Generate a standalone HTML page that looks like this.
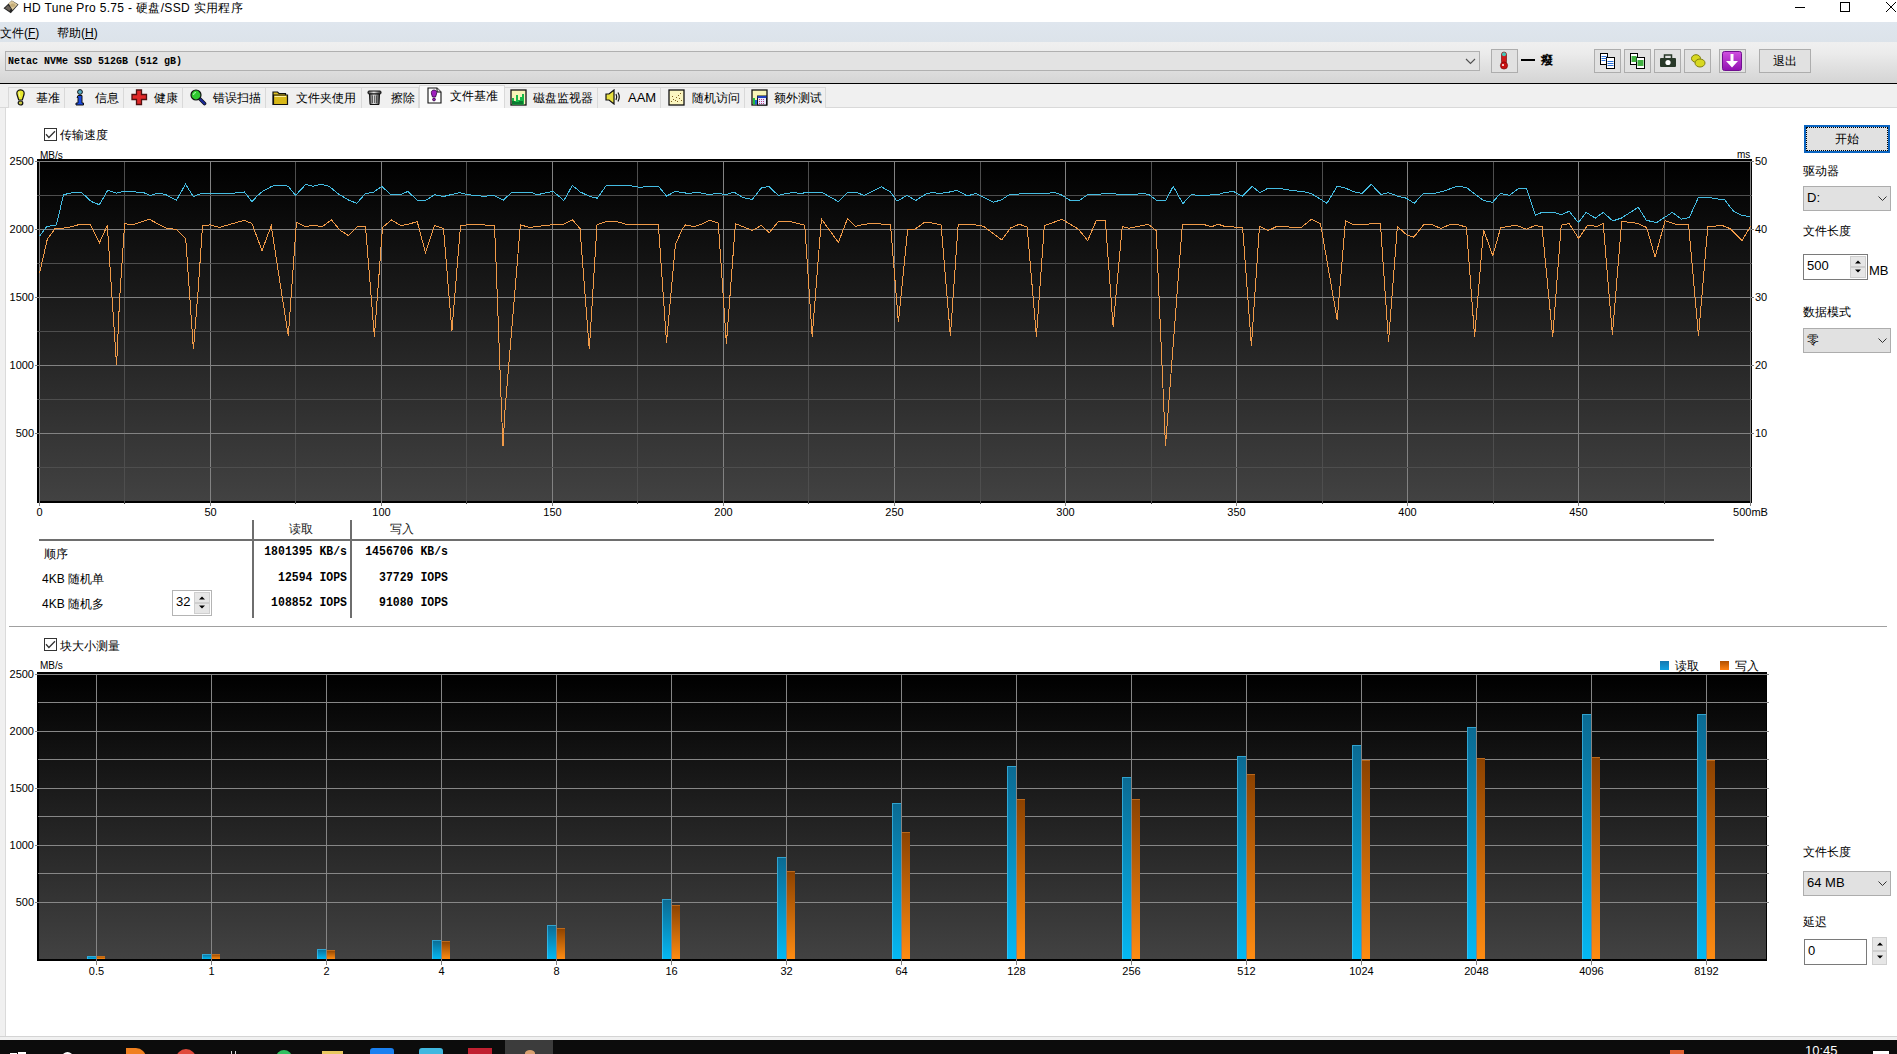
<!DOCTYPE html><html><head><meta charset="utf-8"><style>
*{box-sizing:border-box;}
html,body{margin:0;padding:0;}
body{width:1897px;height:1054px;position:relative;overflow:hidden;background:#ffffff;font-family:"Liberation Sans",sans-serif;font-size:12px;color:#000;}
.a{position:absolute;}
.t{position:absolute;white-space:nowrap;line-height:14px;}
.btn{position:absolute;background:#e1e1e1;border:1px solid #adadad;}
.combo{position:absolute;background:#e1e1e1;border:1px solid #adadad;}
.mono{font-family:"Liberation Mono",monospace;font-weight:bold;}
.spin{position:absolute;background:#e6e6e6;border:1px solid #cfcfcf;}
</style></head><body><div class="a" style="left:0px;top:0px;width:1897px;height:21px;background:#fff;"></div>
<svg class="a" style="left:2px;top:0px" width="17" height="14" viewBox="0 0 17 14"><path d="M1.5 8.2 L9.8 0.4 L16.5 4.6 L8.8 13.3 Z" fill="#262626"/><path d="M6.5 3.2 L10 0.8 L15.6 4.6 L10.5 10 Z" fill="#dcc89a"/><path d="M3 8.2 L6 5.2 L9 8.5 L7.5 11 Z" fill="#6a6258"/><ellipse cx="10.8" cy="5.2" rx="2.4" ry="1.8" fill="#c4ac78"/></svg>
<div class="t" style="left:23px;top:1px;letter-spacing:0.33px;">HD Tune Pro 5.75 - 硬盘/SSD 实用程序</div>
<div class="a" style="left:1795px;top:7px;width:10px;height:1px;background:#000"></div>
<div class="a" style="left:1840px;top:2px;width:10px;height:10px;border:1px solid #000"></div>
<svg class="a" style="left:1885px;top:1px" width="12" height="12" viewBox="0 0 12 12"><path d="M1 1 L11 11 M11 1 L1 11" stroke="#000" stroke-width="1"/></svg>
<div class="a" style="left:0px;top:22px;width:1897px;height:20px;background:linear-gradient(#dfe6ee,#dce3ea);"></div>
<div class="t" style="left:0px;top:26px;">文件(<u>F</u>)</div>
<div class="t" style="left:57px;top:26px;">帮助(<u>H</u>)</div>
<div class="a" style="left:0px;top:42px;width:1897px;height:41px;background:linear-gradient(#f0f0f0,#ececec 25%,#d4d4d4);"></div>
<div class="a" style="left:0px;top:83px;width:1897px;height:1px;background:#000;"></div>
<div class="combo" style="left:5px;top:51px;width:1475px;height:20px;background:#e3e3e3;border-color:#b0b0b0;"></div>
<div class="t mono" style="left:8px;top:54px;font-size:10px;line-height:14px;transform:scaleY(1.1);transform-origin:0 0;">Netac NVMe SSD 512GB (512 gB)</div>
<svg class="a" style="left:1465px;top:58px" width="11" height="7" viewBox="0 0 11 7"><path d="M1 1 L5.5 5.5 L10 1" stroke="#505050" fill="none" stroke-width="1.1"/></svg>
<div class="btn" style="left:1491px;top:49px;width:27px;height:24px;"></div>
<svg class="a" style="left:1499px;top:51px" width="10" height="19" viewBox="0 0 10 19"><rect x="2.5" y="1" width="5" height="12" rx="2.5" fill="#d01818" stroke="#600" stroke-width="0.6"/><rect x="3" y="1.2" width="4" height="4" rx="2" fill="#40c8b8"/><circle cx="5" cy="14.5" r="3.6" fill="#c81010" stroke="#600" stroke-width="0.6"/><circle cx="4" cy="14" r="1" fill="#fff"/></svg>
<div class="a" style="left:1521px;top:59px;width:14px;height:2px;background:#000;"></div>
<div class="t" style="left:1541px;top:53px;font-weight:bold;">癈</div>
<div class="btn" style="left:1594px;top:49px;width:27px;height:24px;"></div>
<div class="btn" style="left:1624px;top:49px;width:27px;height:24px;"></div>
<div class="btn" style="left:1654px;top:49px;width:27px;height:24px;"></div>
<div class="btn" style="left:1684px;top:49px;width:27px;height:24px;"></div>
<div class="btn" style="left:1719px;top:49px;width:27px;height:24px;"></div>
<svg class="a" style="left:1599px;top:52px" width="18" height="18" viewBox="0 0 18 18"><rect x="1.5" y="1.5" width="7" height="11" fill="#fff" stroke="#000"/><rect x="7.5" y="5.5" width="8" height="11" fill="#fff" stroke="#000"/><path d="M2.5 4.5h5M2.5 6.5h5M2.5 8.5h4M8.5 9.5h6M8.5 11.5h6M8.5 13.5h6" stroke="#2a70d8"/></svg>
<svg class="a" style="left:1629px;top:52px" width="18" height="18" viewBox="0 0 18 18"><rect x="1.5" y="1.5" width="7" height="11" fill="#fff" stroke="#000"/><rect x="7.5" y="5.5" width="8" height="11" fill="#fff" stroke="#000"/><rect x="2.5" y="4" width="5" height="6" fill="#40b040"/><rect x="8.5" y="8" width="6" height="6" fill="#40b040"/></svg>
<svg class="a" style="left:1659px;top:53px" width="18" height="16" viewBox="0 0 18 16"><rect x="1" y="5" width="16" height="9" rx="1" fill="#283828"/><rect x="5.5" y="2" width="7" height="4" fill="none" stroke="#283828" stroke-width="1.5"/><circle cx="9" cy="9.5" r="2.6" fill="#fff"/></svg>
<svg class="a" style="left:1689px;top:52px" width="18" height="18" viewBox="0 0 18 18"><ellipse cx="7" cy="6.5" rx="4.5" ry="3.8" fill="#d8d820" stroke="#808010"/><ellipse cx="11" cy="11" rx="5" ry="4" fill="#d8d820" stroke="#808010"/></svg>
<svg class="a" style="left:1722px;top:51px" width="21" height="20" viewBox="0 0 21 20"><defs><linearGradient id="pg" x1="0" y1="0" x2="0" y2="1"><stop offset="0" stop-color="#d050e0"/><stop offset="1" stop-color="#9010b0"/></linearGradient></defs><rect x="0.5" y="0.5" width="19" height="19" rx="2" fill="url(#pg)" stroke="#701090"/><path d="M8.5 3 H11.5 V10 H16 L10 16.5 L4 10 H8.5 Z" fill="#fff"/></svg>
<div class="btn" style="left:1759px;top:49px;width:52px;height:24px;"></div>
<div class="t" style="left:1773px;top:54px;">退出</div>
<div class="a" style="left:0px;top:84px;width:1897px;height:23px;background:#f0f0f0;"></div>
<div class="a" style="left:0px;top:107px;width:1897px;height:1px;background:#d9d9d9;"></div>
<div class="a" style="left:8px;top:87px;width:57px;height:21px;background:#f0f0f0;border:1px solid #d9d9d9;border-bottom:none;"></div>
<div class="t" style="left:36px;top:91px;">基准</div>
<div class="a" style="left:65px;top:87px;width:59px;height:21px;background:#f0f0f0;border:1px solid #d9d9d9;border-bottom:none;border-left:none;"></div>
<div class="t" style="left:95px;top:91px;">信息</div>
<div class="a" style="left:124px;top:87px;width:59px;height:21px;background:#f0f0f0;border:1px solid #d9d9d9;border-bottom:none;border-left:none;"></div>
<div class="t" style="left:154px;top:91px;">健康</div>
<div class="a" style="left:183px;top:87px;width:83px;height:21px;background:#f0f0f0;border:1px solid #d9d9d9;border-bottom:none;border-left:none;"></div>
<div class="t" style="left:213px;top:91px;">错误扫描</div>
<div class="a" style="left:266px;top:87px;width:96px;height:21px;background:#f0f0f0;border:1px solid #d9d9d9;border-bottom:none;border-left:none;"></div>
<div class="t" style="left:296px;top:91px;">文件夹使用</div>
<div class="a" style="left:362px;top:87px;width:57px;height:21px;background:#f0f0f0;border:1px solid #d9d9d9;border-bottom:none;border-left:none;"></div>
<div class="t" style="left:391px;top:91px;">擦除</div>
<div class="a" style="left:419px;top:85px;width:86px;height:23px;background:#f9f9f9;border:1px solid #d9d9d9;border-bottom:none;"></div>
<div class="t" style="left:450px;top:89px;">文件基准</div>
<div class="a" style="left:505px;top:87px;width:93px;height:21px;background:#f0f0f0;border:1px solid #d9d9d9;border-bottom:none;border-left:none;"></div>
<div class="t" style="left:533px;top:91px;">磁盘监视器</div>
<div class="a" style="left:598px;top:87px;width:63px;height:21px;background:#f0f0f0;border:1px solid #d9d9d9;border-bottom:none;border-left:none;"></div>
<div class="t" style="left:628px;top:91px;font-size:13px;">AAM</div>
<div class="a" style="left:661px;top:87px;width:84px;height:21px;background:#f0f0f0;border:1px solid #d9d9d9;border-bottom:none;border-left:none;"></div>
<div class="t" style="left:692px;top:91px;">随机访问</div>
<div class="a" style="left:745px;top:87px;width:81px;height:21px;background:#f0f0f0;border:1px solid #d9d9d9;border-bottom:none;border-left:none;"></div>
<div class="t" style="left:774px;top:91px;">额外测试</div>
<svg class="a" style="left:16px;top:89px" width="10" height="17" viewBox="0 0 10 17"><path d="M4.5 0.8 C7.5 0.8 8.5 3 8 5.5 L6.3 11 L2.7 11 L1 5.5 C0.5 3 1.5 0.8 4.5 0.8Z" fill="#e8e830" stroke="#111" stroke-width="1.2"/><path d="M3 3 L4 8" stroke="#fff" stroke-opacity="0.6"/><ellipse cx="4.5" cy="14" rx="2.3" ry="2" fill="#c8c840" stroke="#111" stroke-width="1.2"/></svg>
<svg class="a" style="left:75px;top:89px" width="10" height="17" viewBox="0 0 10 17"><circle cx="5" cy="3" r="2.4" fill="#58b0c8" stroke="#111" stroke-width="1"/><path d="M3 6.5 H7 V14 H8.5 V16 H1 V14 H3 V8.5 H2 Z" fill="#1848e0" stroke="#111" stroke-width="1"/></svg>
<svg class="a" style="left:131px;top:89px" width="17" height="17" viewBox="0 0 17 17"><path d="M5.5 1 H10.5 V5.5 H15.5 V10.5 H10.5 V15.5 H5.5 V10.5 H1 V5.5 H5.5 Z" fill="#e02828" stroke="#501010" stroke-width="1.3"/></svg>
<svg class="a" style="left:190px;top:89px" width="17" height="17" viewBox="0 0 17 17"><path d="M9 9 L14.5 14.5" stroke="#111" stroke-width="3.6" stroke-linecap="round"/><path d="M9 9 L14.5 14.5" stroke="#1a2a9a" stroke-width="2.2" stroke-linecap="round"/><circle cx="6" cy="6" r="5" fill="#30c830" stroke="#111" stroke-width="1.2"/><path d="M3.5 6 A2.5 2.5 0 0 1 6 3.5" stroke="#b0ffb0" fill="none"/></svg>
<svg class="a" style="left:272px;top:89px" width="17" height="17" viewBox="0 0 17 17"><path d="M1 3 H5.5 L7 4.5 H13.5 V15.5 H1 Z" fill="#e0c020" stroke="#111" stroke-width="1.2"/><path d="M1.5 6 H15.5 V15.5 H1.5 Z" fill="#d8b818" stroke="#111" stroke-width="1.2"/><path d="M2.5 7.5 H14" stroke="#fff0a0"/></svg>
<svg class="a" style="left:367px;top:89px" width="16" height="17" viewBox="0 0 16 17"><defs><linearGradient id="tg" x1="0" x2="1"><stop offset="0" stop-color="#404040"/><stop offset="0.45" stop-color="#e8e8e8"/><stop offset="1" stop-color="#303030"/></linearGradient></defs><rect x="1" y="2" width="13" height="3" rx="1" fill="url(#tg)" stroke="#111"/><path d="M2.5 5 H12.5 L12 15.5 H3 Z" fill="url(#tg)" stroke="#111"/><path d="M5.5 6.5 V14 M7.5 6.5 V14 M9.5 6.5 V14" stroke="#222" stroke-opacity="0.6"/></svg>
<svg class="a" style="left:427px;top:87px" width="15" height="17" viewBox="0 0 15 17"><path d="M1 1 H10 L14 5 V16 H1 Z" fill="#fff" stroke="#111" stroke-width="1.1"/><path d="M10 1 V5 H14" fill="#ddd" stroke="#111"/><path d="M7 3 C9.5 3 10 5 9.5 7 L8.5 10 H5.5 L4.5 7 C4 5 4.5 3 7 3Z" fill="#a020c0" stroke="#300040" stroke-width="0.8"/><circle cx="7" cy="12.5" r="1.4" fill="#a020c0" stroke="#300040" stroke-width="0.8"/></svg>
<svg class="a" style="left:510px;top:89px" width="17" height="17" viewBox="0 0 17 17"><rect x="1" y="1" width="15" height="15" fill="#f8f4b8" stroke="#111" stroke-width="1.3"/><path d="M2 15.5 V9 H4 V12 H6 V6 H8 V11 H10 V8 H12 V5 H14 V15.5 Z" fill="#18b848"/><path d="M2 15.5 V12 H5 V13 H9 V12 H13 V15.5Z" fill="#0a7a30"/></svg>
<svg class="a" style="left:605px;top:89px" width="17" height="16" viewBox="0 0 17 16"><path d="M1 5 H4 L9 1 V15 L4 11 H1 Z" fill="#e8e040" stroke="#111" stroke-width="1.2"/><path d="M11 5 Q12.5 8 11 11 M13 3.5 Q15.5 8 13 12.5" stroke="#111" stroke-width="1.2" fill="none"/></svg>
<svg class="a" style="left:668px;top:89px" width="17" height="17" viewBox="0 0 17 17"><rect x="1" y="1" width="15" height="15" fill="#fbf6c0" stroke="#111" stroke-width="1.3"/><g fill="#806020"><rect x="3" y="12" width="1" height="1"/><rect x="5" y="10" width="1" height="1"/><rect x="7" y="11" width="1" height="1"/><rect x="8" y="8" width="1" height="1"/><rect x="10" y="6" width="1" height="1"/><rect x="12" y="4" width="1" height="1"/><rect x="11" y="9" width="1" height="1"/><rect x="13" y="11" width="1" height="1"/><rect x="4" y="7" width="1" height="1"/><rect x="9" y="12" width="1" height="1"/></g></svg>
<svg class="a" style="left:751px;top:89px" width="17" height="17" viewBox="0 0 17 17"><rect x="1" y="1" width="15" height="15" fill="#f8f4b8" stroke="#111" stroke-width="1.3"/><rect x="2" y="9" width="2" height="6.5" fill="#20c040"/><rect x="4" y="11" width="2" height="4.5" fill="#2060d0"/><rect x="6.5" y="7" width="9" height="9" fill="#e8e8ff" stroke="#111" stroke-width="1"/><rect x="6.5" y="7" width="9" height="2" fill="#2040c0"/><g fill="#c04080"><rect x="8" y="10" width="1" height="1"/><rect x="10" y="10" width="1" height="1"/><rect x="12" y="10" width="1" height="1"/><rect x="8" y="12" width="1" height="1"/><rect x="10" y="12" width="1" height="1"/><rect x="12" y="12" width="1" height="1"/><rect x="8" y="14" width="1" height="1"/><rect x="10" y="14" width="1" height="1"/><rect x="12" y="14" width="1" height="1"/></g></svg>
<div class="a" style="left:0px;top:108px;width:5px;height:928px;background:#f0f0f0;"></div>
<div class="a" style="left:5px;top:108px;width:1px;height:928px;background:#dadada;"></div>
<div class="a" style="left:0px;top:1036px;width:1897px;height:4px;background:#f0f0f0;border-top:1px solid #d4d4d4;"></div>
<div class="a" style="left:0px;top:1040px;width:1897px;height:14px;background:#0c0c0c;"></div>
<svg class="a" style="left:0;top:0" width="1897" height="1054" viewBox="0 0 1897 1054">
<defs><linearGradient id="g1" x1="0" y1="0" x2="0" y2="1"><stop offset="0" stop-color="#000"/><stop offset="1" stop-color="#424242"/></linearGradient><linearGradient id="g2" x1="0" y1="0" x2="0" y2="1"><stop offset="0" stop-color="#000"/><stop offset="1" stop-color="#424242"/></linearGradient><linearGradient id="bb2" x1="0" y1="0" x2="0" y2="1"><stop offset="0" stop-color="#0b6a92"/><stop offset="1" stop-color="#05b8f2"/></linearGradient><linearGradient id="bo2" x1="0" y1="0" x2="0" y2="1"><stop offset="0" stop-color="#8c4200"/><stop offset="1" stop-color="#ff8c12"/></linearGradient></defs>
<rect x="37" y="159" width="1715" height="344" fill="#000"/>
<rect x="39" y="161" width="1712" height="340" fill="url(#g1)"/>
<g shape-rendering="crispEdges" fill="none">
<path d="M39.5 161V506" stroke="#828282"/>
<path d="M124.5 161V504" stroke="#4e4e4e"/>
<path d="M210.5 161V506" stroke="#828282"/>
<path d="M295.5 161V504" stroke="#4e4e4e"/>
<path d="M381.5 161V506" stroke="#828282"/>
<path d="M466.5 161V504" stroke="#4e4e4e"/>
<path d="M552.5 161V506" stroke="#828282"/>
<path d="M637.5 161V504" stroke="#4e4e4e"/>
<path d="M723.5 161V506" stroke="#828282"/>
<path d="M808.5 161V504" stroke="#4e4e4e"/>
<path d="M894.5 161V506" stroke="#828282"/>
<path d="M980.5 161V504" stroke="#4e4e4e"/>
<path d="M1065.5 161V506" stroke="#828282"/>
<path d="M1151.5 161V504" stroke="#4e4e4e"/>
<path d="M1236.5 161V506" stroke="#828282"/>
<path d="M1322.5 161V504" stroke="#4e4e4e"/>
<path d="M1407.5 161V506" stroke="#828282"/>
<path d="M1493.5 161V504" stroke="#4e4e4e"/>
<path d="M1578.5 161V506" stroke="#828282"/>
<path d="M1664.5 161V504" stroke="#4e4e4e"/>
<path d="M1750.5 161V506" stroke="#828282"/>
<path d="M35 161.5H1754" stroke="#828282"/>
<path d="M37 195.5H1752" stroke="#4e4e4e"/>
<path d="M35 229.5H1754" stroke="#828282"/>
<path d="M37 263.5H1752" stroke="#4e4e4e"/>
<path d="M35 297.5H1754" stroke="#828282"/>
<path d="M37 331.5H1752" stroke="#4e4e4e"/>
<path d="M35 365.5H1754" stroke="#828282"/>
<path d="M37 399.5H1752" stroke="#4e4e4e"/>
<path d="M35 433.5H1754" stroke="#828282"/>
<path d="M37 467.5H1752" stroke="#4e4e4e"/>
</g>
<polyline fill="none" stroke="#f09a48" stroke-width="1" shape-rendering="crispEdges" points="39.5,273.4 47.3,239.3 54.9,228.8 67.6,227.7 80.1,224.3 90.3,224.3 99.3,243.0 107.3,225.4 111.9,295.2 116.6,365.4 119.4,302.8 124.6,223.9 134.5,224.3 149.2,219.2 166.2,228.3 176.4,229.4 185.7,238.4 193.4,349.3 198.2,289.5 202.5,225.7 210.4,224.9 219.5,227.4 244.4,220.3 252.0,223.6 262.0,250.6 271.2,225.7 288.3,336.0 296.4,222.1 305.3,226.6 313.2,225.4 322.3,226.6 331.3,219.8 340.4,230.5 348.5,235.6 357.4,226.5 365.5,226.5 374.4,336.7 382.5,227.5 391.4,219.9 400.6,225.5 408.4,224.3 417.2,221.5 425.5,252.7 434.6,225.5 443.5,228.4 451.9,331.0 460.5,225.7 467.0,224.9 473.8,224.3 481.7,224.6 494.5,226.0 496.0,262.0 501.5,410.0 503.0,446.2 505.0,410.0 520.4,224.8 529.3,227.4 550.9,224.9 563.3,224.3 572.4,219.8 580.0,228.5 589.3,349.4 597.0,224.8 606.4,221.5 616.6,221.5 627.9,224.9 658.4,224.8 666.5,342.5 675.4,244.6 682.0,229.8 685.4,224.9 694.5,226.6 701.3,224.3 709.2,220.3 718.3,223.0 726.4,343.8 735.4,223.6 752.3,230.5 761.3,225.4 769.3,232.8 778.3,221.5 789.7,221.5 804.8,225.3 812.2,336.7 821.4,219.0 838.4,242.4 847.5,218.6 855.4,226.6 863.3,224.3 873.5,223.5 890.5,224.6 898.4,322.4 907.7,229.2 914.1,229.9 924.7,222.1 935.4,223.5 941.1,225.0 950.4,336.0 958.2,224.2 971.7,224.2 983.8,226.4 1001.6,239.9 1010.8,227.8 1019.4,224.2 1027.2,227.1 1036.4,336.7 1044.3,225.7 1062.0,219.3 1078.4,229.2 1087.7,240.6 1096.2,220.7 1105.4,220.7 1113.1,326.6 1122.2,226.6 1129.0,228.3 1148.3,224.3 1156.2,230.5 1165.5,446.2 1182.3,224.9 1202.7,224.3 1211.7,226.6 1218.5,224.3 1225.3,226.6 1242.6,227.4 1251.4,346.0 1259.5,226.2 1268.4,230.5 1276.3,226.6 1301.3,227.4 1311.5,219.2 1320.5,223.7 1337.2,319.6 1345.5,220.7 1354.0,225.0 1366.8,224.2 1376.1,223.3 1380.4,223.5 1388.5,341.6 1397.4,226.4 1406.7,234.9 1413.8,237.1 1423.8,224.7 1432.3,224.7 1440.8,228.5 1449.4,224.7 1457.9,224.7 1466.4,227.1 1474.6,336.7 1483.5,229.9 1492.8,255.6 1500.6,227.8 1516.2,225.2 1526.2,229.2 1534.7,225.7 1542.0,226.4 1552.7,337.4 1561.2,225.2 1569.0,223.5 1578.7,238.5 1587.5,225.2 1597.5,226.4 1603.2,223.5 1612.4,334.5 1621.7,221.4 1637.3,223.3 1646.6,227.5 1655.1,257.0 1665.1,220.7 1675.8,224.2 1688.6,224.7 1698.5,336.0 1707.8,226.4 1722.7,225.7 1729.8,228.5 1741.9,240.6 1750.4,226.4"/>
<polyline fill="none" stroke="#44bce2" stroke-width="1" shape-rendering="crispEdges" points="39.5,236.2 46.6,226.6 56.3,224.9 63.6,194.8 69.9,193.1 81.2,192.2 91.4,201.6 99.3,204.7 107.8,190.3 116.3,193.1 124.3,191.4 128.8,191.4 143.5,192.6 150.3,195.4 158.3,193.1 165.1,194.3 176.4,200.2 185.5,184.3 193.4,196.5 201.3,193.4 231.9,193.4 244.4,192.0 252.0,201.6 257.7,195.4 263.3,190.9 271.8,186.3 275.8,185.2 283.7,185.4 288.3,186.3 295.6,195.4 305.8,184.3 313.2,186.3 321.1,184.3 329.1,186.3 338.1,193.7 348.3,199.9 356.8,203.3 365.3,193.7 373.8,192.0 381.8,186.3 390.8,194.8 400.5,194.8 407.8,191.4 417.5,200.5 425.4,200.5 434.5,194.8 443.5,196.5 459.4,192.6 467.0,194.5 473.8,195.4 484.0,196.3 494.2,195.4 503.3,200.2 511.8,192.2 531.6,192.6 537.3,194.8 546.3,192.6 553.1,191.4 563.9,200.5 572.4,185.4 580.3,192.0 589.4,196.3 597.3,198.2 606.4,185.4 618.9,185.8 627.9,185.4 639.3,187.2 658.5,186.3 666.5,196.0 675.5,191.4 682.0,192.6 688.8,193.4 697.9,192.2 709.2,194.8 716.0,193.4 726.2,194.5 734.1,192.2 743.2,197.7 752.3,199.4 761.3,188.0 768.7,186.3 778.3,195.4 786.3,193.4 793.1,192.6 801.0,193.4 808.9,192.2 821.4,192.2 838.4,201.6 847.5,192.2 856.5,192.6 864.5,195.4 881.5,186.9 890.5,192.0 897.0,201.1 907.2,195.4 915.7,200.5 926.5,193.7 932.1,192.6 940.1,193.4 946.9,192.6 957.1,190.3 967.3,196.0 975.8,193.4 983.1,197.1 993.3,202.2 1001.3,199.9 1009.2,194.8 1022.8,193.7 1048.9,193.4 1053.4,192.2 1060.2,194.3 1070.4,200.5 1079.5,200.5 1087.4,194.8 1112.0,193.4 1118.8,194.5 1134.7,194.5 1142.6,193.4 1149.4,194.8 1156.8,200.5 1165.8,200.5 1173.2,186.3 1182.8,203.6 1191.3,194.8 1202.7,195.4 1218.5,194.5 1224.2,192.6 1233.3,191.4 1242.3,196.3 1252.0,186.3 1259.9,192.6 1267.3,188.6 1280.9,188.6 1291.1,190.3 1304.7,192.0 1311.5,193.7 1327.0,203.3 1337.2,186.3 1344.0,187.5 1354.2,191.8 1362.1,193.4 1371.2,184.3 1380.8,194.5 1388.2,192.6 1397.3,196.0 1406.3,198.2 1414.3,203.3 1423.3,193.4 1435.8,193.1 1442.6,191.4 1457.3,186.3 1466.4,187.5 1483.4,200.5 1492.5,202.4 1500.4,193.4 1509.5,195.4 1518.5,188.4 1526.5,188.4 1535.5,215.2 1542.0,212.4 1554.5,212.4 1561.3,214.7 1569.2,211.3 1578.3,222.6 1586.2,212.4 1595.3,218.1 1603.2,212.4 1612.8,220.9 1621.3,218.1 1638.3,207.3 1646.3,220.3 1656.5,222.6 1672.3,212.4 1681.4,219.2 1689.3,217.5 1698.4,197.4 1709.7,197.4 1714.3,198.8 1724.5,199.4 1733.5,211.3 1741.5,215.2 1750.0,216.7"/>
<rect x="37" y="672" width="1730" height="289" fill="#000"/>
<rect x="39" y="674" width="1727" height="285" fill="url(#g2)"/>
<g shape-rendering="crispEdges" fill="none">
<path d="M96.5 674V965" stroke="#858585"/>
<path d="M211.5 674V965" stroke="#858585"/>
<path d="M326.5 674V965" stroke="#858585"/>
<path d="M441.5 674V965" stroke="#858585"/>
<path d="M556.5 674V965" stroke="#858585"/>
<path d="M671.5 674V965" stroke="#858585"/>
<path d="M786.5 674V965" stroke="#858585"/>
<path d="M901.5 674V965" stroke="#858585"/>
<path d="M1016.5 674V965" stroke="#858585"/>
<path d="M1131.5 674V965" stroke="#858585"/>
<path d="M1246.5 674V965" stroke="#858585"/>
<path d="M1361.5 674V965" stroke="#858585"/>
<path d="M1476.5 674V965" stroke="#858585"/>
<path d="M1591.5 674V965" stroke="#858585"/>
<path d="M1706.5 674V965" stroke="#858585"/>
<path d="M35 674.5H1769" stroke="#878787"/>
<path d="M38 702.5H1769" stroke="#878787"/>
<path d="M35 731.5H1769" stroke="#878787"/>
<path d="M38 759.5H1769" stroke="#878787"/>
<path d="M35 788.5H1769" stroke="#878787"/>
<path d="M38 816.5H1769" stroke="#878787"/>
<path d="M35 845.5H1769" stroke="#878787"/>
<path d="M38 873.5H1769" stroke="#878787"/>
<path d="M35 902.5H1769" stroke="#878787"/>
<rect x="87" y="956" width="9" height="3" fill="url(#bb2)"/>
<path d="M87.5 956V959M87 956.5H96" stroke="#50d0ff" stroke-opacity="0.55"/>
<rect x="97" y="956" width="8" height="3" fill="url(#bo2)"/>
<path d="M97 956.5H105" stroke="#ffa040" stroke-opacity="0.4"/>
<rect x="202" y="954" width="9" height="5" fill="url(#bb2)"/>
<path d="M202.5 954V959M202 954.5H211" stroke="#50d0ff" stroke-opacity="0.55"/>
<rect x="212" y="954" width="8" height="5" fill="url(#bo2)"/>
<path d="M212 954.5H220" stroke="#ffa040" stroke-opacity="0.4"/>
<rect x="317" y="949" width="9" height="10" fill="url(#bb2)"/>
<path d="M317.5 949V959M317 949.5H326" stroke="#50d0ff" stroke-opacity="0.55"/>
<rect x="327" y="950" width="8" height="9" fill="url(#bo2)"/>
<path d="M327 950.5H335" stroke="#ffa040" stroke-opacity="0.4"/>
<rect x="432" y="940" width="9" height="19" fill="url(#bb2)"/>
<path d="M432.5 940V959M432 940.5H441" stroke="#50d0ff" stroke-opacity="0.55"/>
<rect x="442" y="941" width="8" height="18" fill="url(#bo2)"/>
<path d="M442 941.5H450" stroke="#ffa040" stroke-opacity="0.4"/>
<rect x="547" y="925" width="9" height="34" fill="url(#bb2)"/>
<path d="M547.5 925V959M547 925.5H556" stroke="#50d0ff" stroke-opacity="0.55"/>
<rect x="557" y="928" width="8" height="31" fill="url(#bo2)"/>
<path d="M557 928.5H565" stroke="#ffa040" stroke-opacity="0.4"/>
<rect x="662" y="899" width="9" height="60" fill="url(#bb2)"/>
<path d="M662.5 899V959M662 899.5H671" stroke="#50d0ff" stroke-opacity="0.55"/>
<rect x="672" y="905" width="8" height="54" fill="url(#bo2)"/>
<path d="M672 905.5H680" stroke="#ffa040" stroke-opacity="0.4"/>
<rect x="777" y="857" width="9" height="102" fill="url(#bb2)"/>
<path d="M777.5 857V959M777 857.5H786" stroke="#50d0ff" stroke-opacity="0.55"/>
<rect x="787" y="871" width="8" height="88" fill="url(#bo2)"/>
<path d="M787 871.5H795" stroke="#ffa040" stroke-opacity="0.4"/>
<rect x="892" y="803" width="9" height="156" fill="url(#bb2)"/>
<path d="M892.5 803V959M892 803.5H901" stroke="#50d0ff" stroke-opacity="0.55"/>
<rect x="902" y="832" width="8" height="127" fill="url(#bo2)"/>
<path d="M902 832.5H910" stroke="#ffa040" stroke-opacity="0.4"/>
<rect x="1007" y="766" width="9" height="193" fill="url(#bb2)"/>
<path d="M1007.5 766V959M1007 766.5H1016" stroke="#50d0ff" stroke-opacity="0.55"/>
<rect x="1017" y="799" width="8" height="160" fill="url(#bo2)"/>
<path d="M1017 799.5H1025" stroke="#ffa040" stroke-opacity="0.4"/>
<rect x="1122" y="777" width="9" height="182" fill="url(#bb2)"/>
<path d="M1122.5 777V959M1122 777.5H1131" stroke="#50d0ff" stroke-opacity="0.55"/>
<rect x="1132" y="799" width="8" height="160" fill="url(#bo2)"/>
<path d="M1132 799.5H1140" stroke="#ffa040" stroke-opacity="0.4"/>
<rect x="1237" y="756" width="9" height="203" fill="url(#bb2)"/>
<path d="M1237.5 756V959M1237 756.5H1246" stroke="#50d0ff" stroke-opacity="0.55"/>
<rect x="1247" y="774" width="8" height="185" fill="url(#bo2)"/>
<path d="M1247 774.5H1255" stroke="#ffa040" stroke-opacity="0.4"/>
<rect x="1352" y="745" width="9" height="214" fill="url(#bb2)"/>
<path d="M1352.5 745V959M1352 745.5H1361" stroke="#50d0ff" stroke-opacity="0.55"/>
<rect x="1362" y="760" width="8" height="199" fill="url(#bo2)"/>
<path d="M1362 760.5H1370" stroke="#ffa040" stroke-opacity="0.4"/>
<rect x="1467" y="727" width="9" height="232" fill="url(#bb2)"/>
<path d="M1467.5 727V959M1467 727.5H1476" stroke="#50d0ff" stroke-opacity="0.55"/>
<rect x="1477" y="758" width="8" height="201" fill="url(#bo2)"/>
<path d="M1477 758.5H1485" stroke="#ffa040" stroke-opacity="0.4"/>
<rect x="1582" y="714" width="9" height="245" fill="url(#bb2)"/>
<path d="M1582.5 714V959M1582 714.5H1591" stroke="#50d0ff" stroke-opacity="0.55"/>
<rect x="1592" y="757" width="8" height="202" fill="url(#bo2)"/>
<path d="M1592 757.5H1600" stroke="#ffa040" stroke-opacity="0.4"/>
<rect x="1697" y="714" width="9" height="245" fill="url(#bb2)"/>
<path d="M1697.5 714V959M1697 714.5H1706" stroke="#50d0ff" stroke-opacity="0.55"/>
<rect x="1707" y="760" width="8" height="199" fill="url(#bo2)"/>
<path d="M1707 760.5H1715" stroke="#ffa040" stroke-opacity="0.4"/>
</g>
</svg>
<div class="a" style="left:44px;top:128px;width:13px;height:13px;border:1px solid #333;background:#fff;"></div>
<svg class="a" style="left:45px;top:130px" width="11" height="9" viewBox="0 0 11 9"><path d="M1 4.3 L3.9 7.5 L10 1.2" stroke="#333" stroke-width="1.3" fill="none"/></svg>
<div class="t" style="left:60px;top:128px;">传输速度</div>
<div class="t" style="left:40px;top:150px;font-size:10px;line-height:12px;">MB/s</div>
<div class="t" style="left:1737px;top:149px;font-size:10px;line-height:12px;">ms</div>
<div class="t" style="left:0;top:154px;width:34px;text-align:right;font-size:11px;">2500</div>
<div class="t" style="left:0;top:222px;width:34px;text-align:right;font-size:11px;">2000</div>
<div class="t" style="left:0;top:290px;width:34px;text-align:right;font-size:11px;">1500</div>
<div class="t" style="left:0;top:358px;width:34px;text-align:right;font-size:11px;">1000</div>
<div class="t" style="left:0;top:426px;width:34px;text-align:right;font-size:11px;">500</div>
<div class="t" style="left:1755px;top:154px;font-size:11px;">50</div>
<div class="t" style="left:1755px;top:222px;font-size:11px;">40</div>
<div class="t" style="left:1755px;top:290px;font-size:11px;">30</div>
<div class="t" style="left:1755px;top:358px;font-size:11px;">20</div>
<div class="t" style="left:1755px;top:426px;font-size:11px;">10</div>
<div class="t" style="left:-1px;top:505px;width:81px;text-align:center;font-size:11px;">0</div>
<div class="t" style="left:170px;top:505px;width:81px;text-align:center;font-size:11px;">50</div>
<div class="t" style="left:341px;top:505px;width:81px;text-align:center;font-size:11px;">100</div>
<div class="t" style="left:512px;top:505px;width:81px;text-align:center;font-size:11px;">150</div>
<div class="t" style="left:683px;top:505px;width:81px;text-align:center;font-size:11px;">200</div>
<div class="t" style="left:854px;top:505px;width:81px;text-align:center;font-size:11px;">250</div>
<div class="t" style="left:1025px;top:505px;width:81px;text-align:center;font-size:11px;">300</div>
<div class="t" style="left:1196px;top:505px;width:81px;text-align:center;font-size:11px;">350</div>
<div class="t" style="left:1367px;top:505px;width:81px;text-align:center;font-size:11px;">400</div>
<div class="t" style="left:1538px;top:505px;width:81px;text-align:center;font-size:11px;">450</div>
<div class="t" style="left:1710px;top:505px;width:81px;text-align:center;font-size:11px;">500mB</div>
<div class="a" style="left:252px;top:520px;width:2px;height:98px;background:#6e6e6e;"></div>
<div class="a" style="left:350px;top:520px;width:2px;height:98px;background:#6e6e6e;"></div>
<div class="a" style="left:39px;top:539px;width:1675px;height:2px;background:#6e6e6e;"></div>
<div class="t" style="left:289px;top:522px;color:#202020;">读取</div>
<div class="t" style="left:390px;top:522px;color:#202020;">写入</div>
<div class="t" style="left:44px;top:547px;">顺序</div>
<div class="t" style="left:42px;top:572px;">4KB 随机单</div>
<div class="t" style="left:42px;top:597px;">4KB 随机多</div>
<div class="t mono" style="left:199px;top:545px;width:148px;text-align:right;font-size:11.5px;transform:scaleY(1.1);transform-origin:0 50%;">1801395 KB/s</div>
<div class="t mono" style="left:300px;top:545px;width:148px;text-align:right;font-size:11.5px;transform:scaleY(1.1);transform-origin:0 50%;">1456706 KB/s</div>
<div class="t mono" style="left:199px;top:571px;width:148px;text-align:right;font-size:11.5px;transform:scaleY(1.1);transform-origin:0 50%;">12594 IOPS</div>
<div class="t mono" style="left:300px;top:571px;width:148px;text-align:right;font-size:11.5px;transform:scaleY(1.1);transform-origin:0 50%;">37729 IOPS</div>
<div class="t mono" style="left:199px;top:596px;width:148px;text-align:right;font-size:11.5px;transform:scaleY(1.1);transform-origin:0 50%;">108852 IOPS</div>
<div class="t mono" style="left:300px;top:596px;width:148px;text-align:right;font-size:11.5px;transform:scaleY(1.1);transform-origin:0 50%;">91080 IOPS</div>
<div class="a" style="left:172px;top:590px;width:40px;height:26px;border:1px solid #b4b4b4;background:#fff;"></div>
<div class="t" style="left:176px;top:595px;font-size:13px;">32</div>
<div class="spin" style="left:194px;top:592px;width:16px;height:11px;"></div>
<div class="spin" style="left:194px;top:603px;width:16px;height:11px;"></div>
<svg class="a" style="left:198px;top:595px" width="8" height="16" viewBox="0 0 8 16"><path d="M1 4.5 L4 1.5 L7 4.5Z M1 10.5 L4 13.5 L7 10.5Z" fill="#000"/></svg>
<div class="a" style="left:9px;top:626px;width:1878px;height:1px;background:#a0a0a0;"></div>
<div class="a" style="left:44px;top:638px;width:13px;height:13px;border:1px solid #333;background:#fff;"></div>
<svg class="a" style="left:45px;top:640px" width="11" height="9" viewBox="0 0 11 9"><path d="M1 4.3 L3.9 7.5 L10 1.2" stroke="#333" stroke-width="1.3" fill="none"/></svg>
<div class="t" style="left:60px;top:639px;">块大小测量</div>
<div class="t" style="left:40px;top:660px;font-size:10px;line-height:12px;">MB/s</div>
<div class="t" style="left:0;top:667px;width:34px;text-align:right;font-size:11px;">2500</div>
<div class="t" style="left:0;top:724px;width:34px;text-align:right;font-size:11px;">2000</div>
<div class="t" style="left:0;top:781px;width:34px;text-align:right;font-size:11px;">1500</div>
<div class="t" style="left:0;top:838px;width:34px;text-align:right;font-size:11px;">1000</div>
<div class="t" style="left:0;top:895px;width:34px;text-align:right;font-size:11px;">500</div>
<div class="t" style="left:56px;top:964px;width:81px;text-align:center;font-size:11px;">0.5</div>
<div class="t" style="left:171px;top:964px;width:81px;text-align:center;font-size:11px;">1</div>
<div class="t" style="left:286px;top:964px;width:81px;text-align:center;font-size:11px;">2</div>
<div class="t" style="left:401px;top:964px;width:81px;text-align:center;font-size:11px;">4</div>
<div class="t" style="left:516px;top:964px;width:81px;text-align:center;font-size:11px;">8</div>
<div class="t" style="left:631px;top:964px;width:81px;text-align:center;font-size:11px;">16</div>
<div class="t" style="left:746px;top:964px;width:81px;text-align:center;font-size:11px;">32</div>
<div class="t" style="left:861px;top:964px;width:81px;text-align:center;font-size:11px;">64</div>
<div class="t" style="left:976px;top:964px;width:81px;text-align:center;font-size:11px;">128</div>
<div class="t" style="left:1091px;top:964px;width:81px;text-align:center;font-size:11px;">256</div>
<div class="t" style="left:1206px;top:964px;width:81px;text-align:center;font-size:11px;">512</div>
<div class="t" style="left:1321px;top:964px;width:81px;text-align:center;font-size:11px;">1024</div>
<div class="t" style="left:1436px;top:964px;width:81px;text-align:center;font-size:11px;">2048</div>
<div class="t" style="left:1551px;top:964px;width:81px;text-align:center;font-size:11px;">4096</div>
<div class="t" style="left:1666px;top:964px;width:81px;text-align:center;font-size:11px;">8192</div>
<div class="a" style="left:1660px;top:661px;width:9px;height:9px;background:linear-gradient(#1478b0,#10a0e0);"></div>
<div class="t" style="left:1675px;top:659px;">读取</div>
<div class="a" style="left:1720px;top:661px;width:9px;height:9px;background:linear-gradient(#b05000,#ff8010);"></div>
<div class="t" style="left:1735px;top:659px;">写入</div>
<div class="a" style="left:1804px;top:125px;width:86px;height:28px;background:#e1e1e1;border:2px solid #0a64c0;"></div>
<div class="a" style="left:1806px;top:127px;width:82px;height:24px;border:1px dotted #000;"></div>
<div class="t" style="left:1835px;top:132px;">开始</div>
<div class="t" style="left:1803px;top:164px;">驱动器</div>
<div class="combo" style="left:1803px;top:186px;width:88px;height:25px;"></div>
<div class="t" style="left:1807px;top:191px;font-size:13px;">D:</div>
<svg class="a" style="left:1878px;top:196px" width="9" height="6" viewBox="0 0 9 6"><path d="M0.5 0.5 L4.5 4.5 L8.5 0.5" stroke="#333" fill="none"/></svg>
<div class="t" style="left:1803px;top:224px;">文件长度</div>
<div class="a" style="left:1803px;top:254px;width:65px;height:26px;border:1px solid #7a7a7a;background:#fff;"></div>
<div class="t" style="left:1807px;top:259px;font-size:13px;">500</div>
<div class="spin" style="left:1850px;top:256px;width:16px;height:11px;"></div>
<div class="spin" style="left:1850px;top:267px;width:16px;height:11px;"></div>
<svg class="a" style="left:1854px;top:259px" width="8" height="16" viewBox="0 0 8 16"><path d="M1 4.5 L4 1.5 L7 4.5Z M1 10.5 L4 13.5 L7 10.5Z" fill="#000"/></svg>
<div class="t" style="left:1869px;top:264px;font-size:13px;">MB</div>
<div class="t" style="left:1803px;top:305px;">数据模式</div>
<div class="combo" style="left:1803px;top:328px;width:88px;height:25px;"></div>
<div class="t" style="left:1807px;top:333px;">零</div>
<svg class="a" style="left:1878px;top:338px" width="9" height="6" viewBox="0 0 9 6"><path d="M0.5 0.5 L4.5 4.5 L8.5 0.5" stroke="#333" fill="none"/></svg>
<div class="t" style="left:1803px;top:845px;">文件长度</div>
<div class="combo" style="left:1803px;top:871px;width:88px;height:25px;"></div>
<div class="t" style="left:1807px;top:876px;font-size:13px;">64 MB</div>
<svg class="a" style="left:1878px;top:881px" width="9" height="6" viewBox="0 0 9 6"><path d="M0.5 0.5 L4.5 4.5 L8.5 0.5" stroke="#333" fill="none"/></svg>
<div class="t" style="left:1803px;top:915px;">延迟</div>
<div class="a" style="left:1804px;top:939px;width:63px;height:26px;border:1px solid #7a7a7a;background:#fff;"></div>
<div class="t" style="left:1808px;top:944px;font-size:13px;">0</div>
<div class="spin" style="left:1872px;top:937px;width:15px;height:14px;"></div>
<div class="spin" style="left:1872px;top:951px;width:15px;height:14px;"></div>
<svg class="a" style="left:1876px;top:940px" width="8" height="22" viewBox="0 0 8 22"><path d="M1 5.5 L4 2.5 L7 5.5Z M1 15.5 L4 18.5 L7 15.5Z" fill="#000"/></svg>
<div class="a" style="left:505px;top:1040px;width:48px;height:14px;background:#3c3c3c;"></div>
<div class="a" style="left:10px;top:1053px;width:7px;height:1px;background:#fff;"></div><div class="a" style="left:18px;top:1052px;width:8px;height:2px;background:#fff;"></div>
<div class="a" style="left:62px;top:1052px;width:11px;height:11px;border:2px solid #fff;border-radius:50%;"></div>
<div class="a" style="left:126px;top:1048px;width:20px;height:14px;background:#f08020;border-radius:0 10px 0 0;"></div>
<div class="a" style="left:176px;top:1049px;width:20px;height:20px;background:#e04a3c;border-radius:50%;"></div>
<div class="a" style="left:276px;top:1050px;width:16px;height:16px;background:#30c060;border-radius:50%;"></div>
<div class="a" style="left:231px;top:1051px;width:1px;height:3px;background:#ddd;"></div><div class="a" style="left:235px;top:1051px;width:1px;height:3px;background:#ddd;"></div>
<div class="a" style="left:322px;top:1051px;width:21px;height:5px;background:#e8c860;"></div>
<div class="a" style="left:370px;top:1048px;width:24px;height:8px;background:#1a80f0;border-radius:3px 3px 0 0;"></div>
<div class="a" style="left:419px;top:1048px;width:24px;height:8px;background:#40b8e0;border-radius:3px 3px 0 0;"></div>
<div class="a" style="left:468px;top:1048px;width:24px;height:8px;background:#c02030;"></div>
<div class="a" style="left:525px;top:1050px;width:10px;height:6px;background:#d8a070;border-radius:50% 50% 0 0;"></div>
<div class="a" style="left:1670px;top:1050px;width:14px;height:6px;background:#e06030;"></div>
<div class="t" style="left:1805px;top:1044px;color:#fff;font-size:13px;">10:45</div>
<div class="a" style="left:1873px;top:1051px;width:16px;height:3px;background:#fff;"></div></body></html>
